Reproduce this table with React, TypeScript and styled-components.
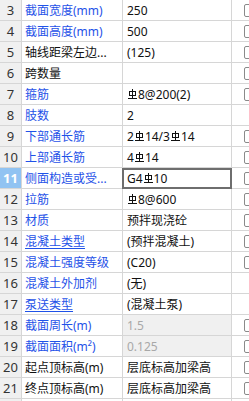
import React from "react";
import styled, { createGlobalStyle } from "styled-components";

const Global = createGlobalStyle`
  html, body { margin: 0; padding: 0; background: #fff; overflow: hidden; }
  body { width: 249px; height: 401px; font-family: "Noto Sans", "Noto Sans CJK SC", sans-serif; }
`;

const Grid = styled.div`
  display: flex;
  flex-direction: column;
  width: 260px;
`;

const Row = styled.div`
  display: grid;
  grid-template-columns: 22px 101px 109px 1fr;
  height: 21px;
  border-bottom: 1px solid #d6d6d6;
  box-sizing: border-box;
`;

const Num = styled.div<{ $active?: boolean }>`
  display: flex;
  align-items: center;
  justify-content: center;
  border-right: 1px solid #d6d6d6;
  background: ${(p) => (p.$active ? "#91c3f2" : "#f0f0f0")};
  color: ${(p) => (p.$active ? "#ffffff" : "#333")};
  font-weight: ${(p) => (p.$active ? 700 : 400)};
  font-size: 13px;
  font-family: "Noto Sans", sans-serif;
`;

const Name = styled.div<{ $blue?: boolean; $link?: boolean }>`
  display: flex;
  align-items: center;
  padding-left: 3px;
  border-right: 1px solid #d6d6d6;
  color: ${(p) => (p.$blue ? "#1f52e8" : "#111")};
  font-size: 12px;
  white-space: nowrap;
  overflow: hidden;
  span {
    text-decoration: ${(p) => (p.$link ? "underline" : "none")};
    text-underline-offset: 2px;
  }
`;

const Value = styled.div<{ $muted?: boolean; $editing?: boolean }>`
  display: flex;
  align-items: center;
  padding-left: ${(p) => (p.$editing ? "2px" : "4px")};
  border-right: 1px solid #d6d6d6;
  background: ${(p) => (p.$muted ? "#f0f0f0" : "#fff")};
  color: ${(p) => (p.$muted ? "#a8a8a8" : "#111")};
  font-size: 12px;
  white-space: nowrap;
  overflow: hidden;
  box-sizing: border-box;
  ${(p) => (p.$editing ? "outline: 2px solid #6e6e6e; outline-offset: -2px; margin: 0 0 -1px -1px; padding-left: 5px;" : "")}
`;

const CheckCell = styled.div`
  display: flex;
  align-items: center;
  padding-left: 12px;
`;

const Box = styled.div`
  width: 11px;
  height: 11px;
  border: 1px solid #8a8a8a;
  border-radius: 2px;
  background: #fff;
  flex-shrink: 0;
`;

const Bar = styled.svg`
  width: 9px;
  height: 11px;
  margin: 0 1px;
  vertical-align: -1px;
`;

/* HRB400 rebar grade mark */
const Grade = () => (
  <Bar viewBox="0 0 9 11">
    <rect x="1.5" y="2.5" width="6" height="4" fill="none" stroke="#111" strokeWidth="1" />
    <line x1="4.5" y1="0" x2="4.5" y2="9.5" stroke="#111" strokeWidth="1" />
    <line x1="0" y1="9.5" x2="9" y2="9.5" stroke="#111" strokeWidth="1" />
  </Bar>
);

type Item = {
  n: number | "";
  name: string;
  blue?: boolean;
  link?: boolean;
  value: React.ReactNode;
  muted?: boolean;
  editing?: boolean;
  check?: boolean;
};

const items: Item[] = [
  { n: 3, name: "截面宽度(mm)", blue: true, value: "250", check: true },
  { n: 4, name: "截面高度(mm)", blue: true, value: "500", check: true },
  { n: 5, name: "轴线距梁左边...", value: "(125)", check: true },
  { n: 6, name: "跨数量", value: "", check: true },
  { n: 7, name: "箍筋", blue: true, value: <><Grade />8@200(2)</>, check: true },
  { n: 8, name: "肢数", blue: true, value: "2" },
  { n: 9, name: "下部通长筋", blue: true, value: <>2<Grade />14/3<Grade />14</>, check: true },
  { n: 10, name: "上部通长筋", blue: true, value: <>4<Grade />14</>, check: true },
  { n: 11, name: "侧面构造或受...", blue: true, value: <>G4<Grade />10</>, editing: true, check: true },
  { n: 12, name: "拉筋", blue: true, value: <><Grade />8@600</>, check: true },
  { n: 13, name: "材质", blue: true, value: "预拌现浇砼", check: true },
  { n: 14, name: "混凝土类型", blue: true, link: true, value: "(预拌混凝土)", check: true },
  { n: 15, name: "混凝土强度等级", blue: true, value: "(C20)", check: true },
  { n: 16, name: "混凝土外加剂", blue: true, value: "(无)" },
  { n: 17, name: "泵送类型", blue: true, link: true, value: "(混凝土泵)" },
  { n: 18, name: "截面周长(m)", blue: true, value: "1.5", muted: true, check: true },
  { n: 19, name: "截面面积(m²)", blue: true, value: "0.125", muted: true, check: true },
  { n: 20, name: "起点顶标高(m)", value: "层底标高加梁高", check: true },
  { n: 21, name: "终点顶标高(m)", value: "层底标高加梁高", check: true },
  { n: "", name: "", value: "" },
];

export default function App() {
  return (
    <>
      <Global />
      <Grid>
        {items.map((it, i) => (
          <Row key={i}>
            <Num $active={it.editing}>{it.n}</Num>
            <Name $blue={it.blue} $link={it.link}>
              <span>{it.name}</span>
            </Name>
            <Value $muted={it.muted} $editing={it.editing}>
              {it.value}
            </Value>
            <CheckCell>{it.check && <Box />}</CheckCell>
          </Row>
        ))}
      </Grid>
    </>
  );
}
